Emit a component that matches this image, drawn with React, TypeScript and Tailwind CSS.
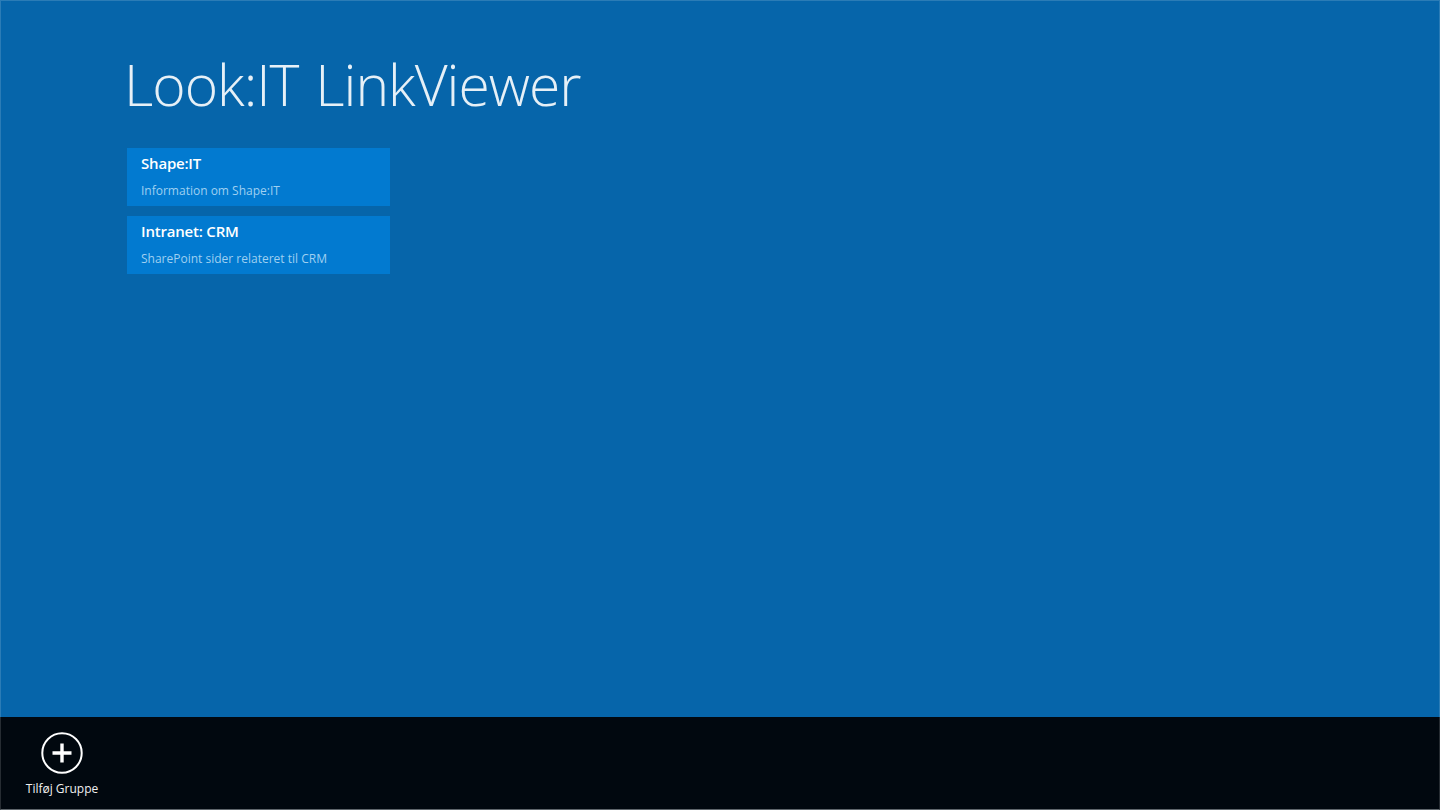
const groups = [
  { title: "Shape:IT", description: "Information om Shape:IT" },
  { title: "Intranet: CRM", description: "SharePoint sider relateret til CRM" },
];

export default function App() {
  return (
    <div className="flex h-[810px] w-[1440px] flex-col overflow-hidden bg-[#0665aa] font-['Open_Sans',sans-serif] text-white">
      <main className="flex-1 border-x border-t border-white/15 pl-[126px] pt-[45px]">
        <h1 className="-ml-[3px] h-[76px] text-[57px] leading-[76px] font-light tracking-[-1px] [word-spacing:3px] text-[#e6f0f7]">Look:IT LinkViewer</h1>
        <div className="mt-[26px] flex flex-col gap-[10px]">
          {groups.map((group) => (
            <div key={group.title} className="h-[58px] w-[263px] bg-[#027ad0] px-[14px] pt-[4px]">
              <div className="text-[15px] leading-[22px] font-semibold tracking-[-0.2px]">{group.title}</div>
              <div className="mt-[8px] text-[12px] leading-[18px] text-[#9fd0f1]">{group.description}</div>
            </div>
          ))}
        </div>
      </main>

      {/* App bar */}
      <footer className="flex h-[93px] items-start border-x border-b border-x-white/15 border-b-[#5f666c] bg-[#01080f] pl-[25px] pt-[15px]">
        <button className="flex w-[72px] flex-col items-center">
          <svg width="42" height="42" viewBox="0 0 42 42" fill="none" stroke="#fff">
            <circle cx="21" cy="21" r="19.7" strokeWidth="2" />
            <path d="M21 11.5v19M11.5 21h19" strokeWidth="3.4" />
          </svg>
          <span className="mt-[6px] text-[12px] leading-[18px] whitespace-nowrap text-[#f0f0f0]">Tilføj Gruppe</span>
        </button>
      </footer>
    </div>
  );
}
